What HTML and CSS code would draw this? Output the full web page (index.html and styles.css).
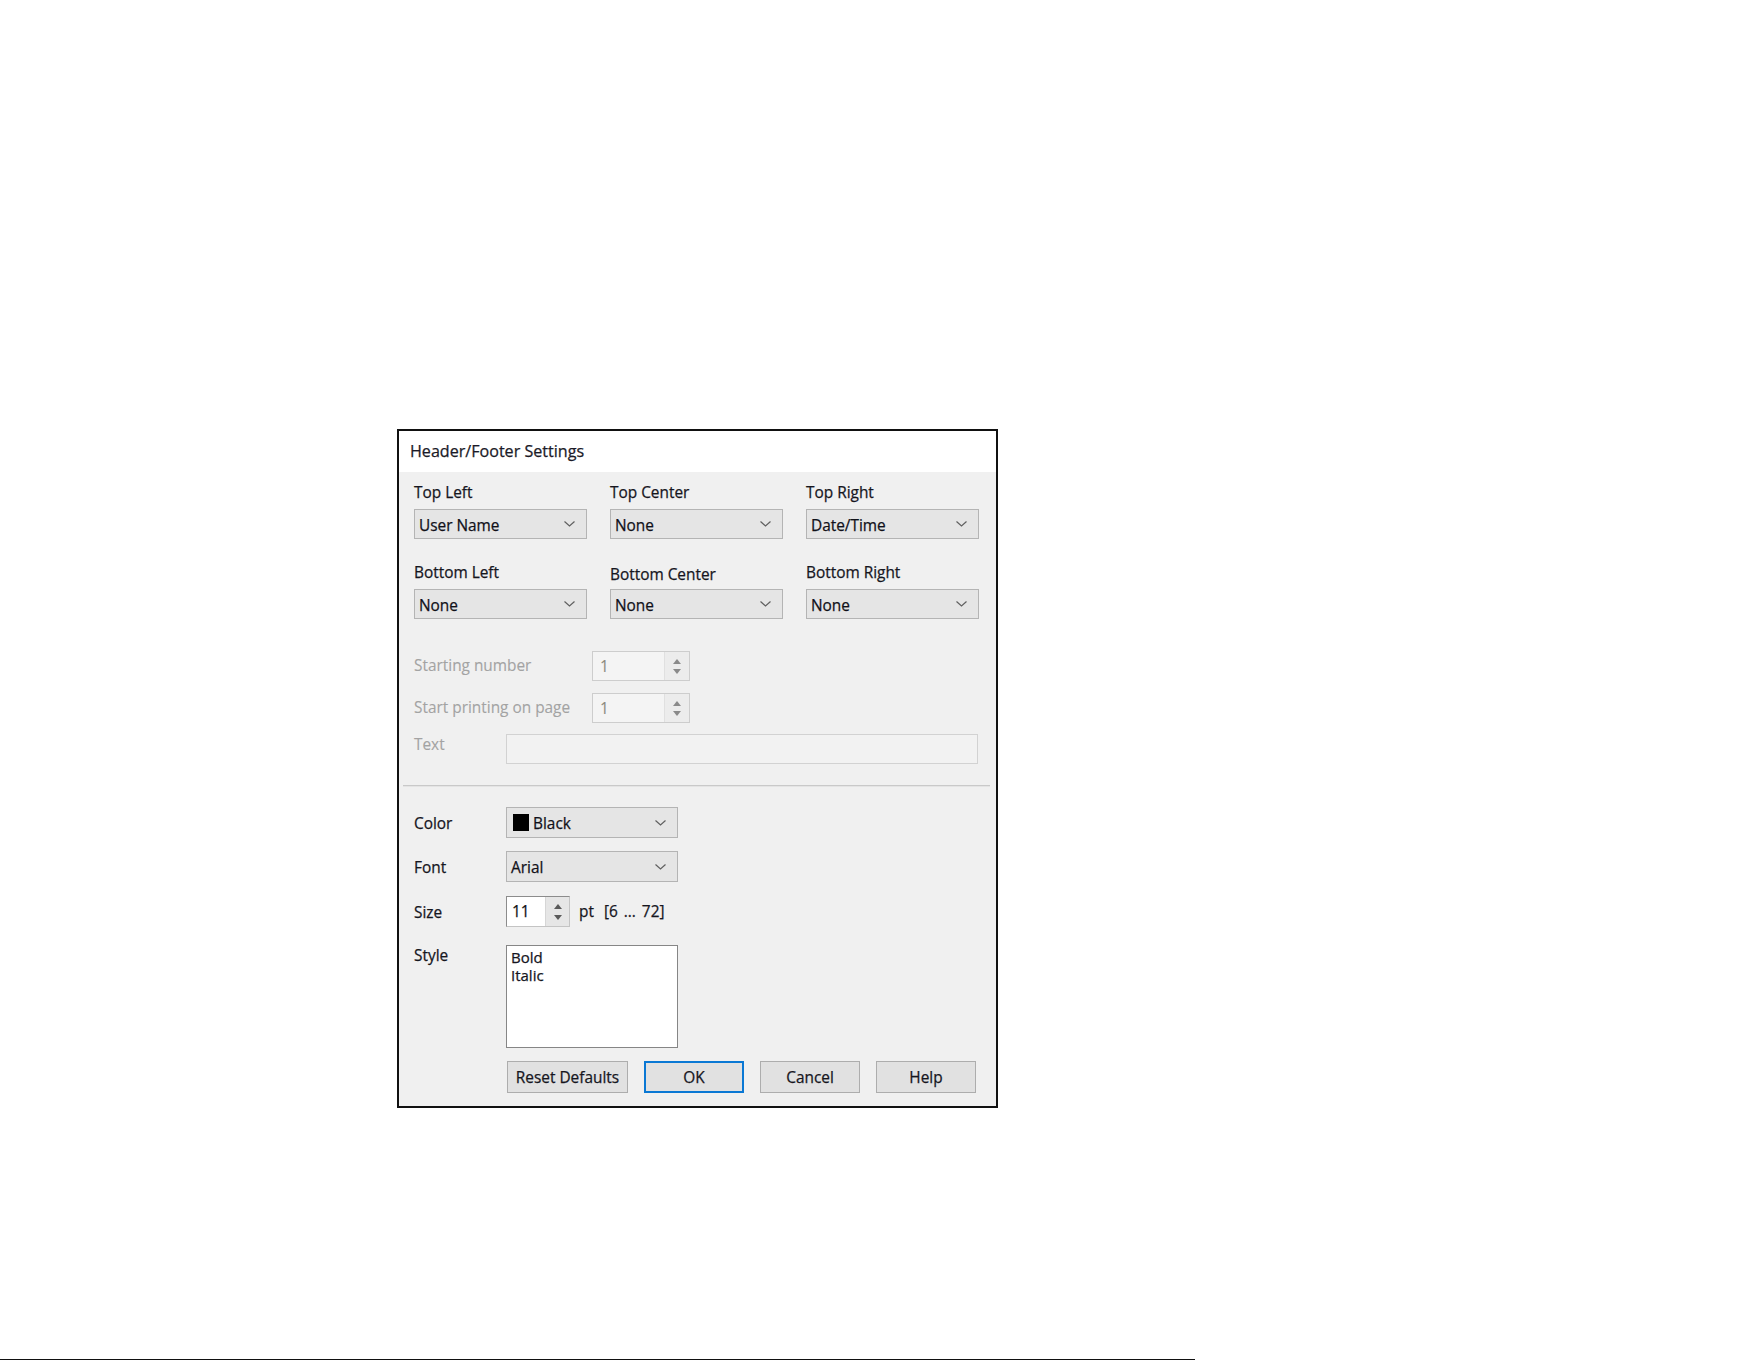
FILE: index.html
```html
<!DOCTYPE html>
<html lang="en">
<head>
<meta charset="utf-8">
<title>Header/Footer Settings</title>
<link rel="stylesheet" href="styles.css">
</head>
<body>
<div class="page">
  <div class="stage">
    <div class="dialog">
      <div class="titlebar">Header/Footer Settings</div>
      <div class="content">
        <div class="positions">
          <div class="field">
            <div class="label">Top Left</div>
            <div class="combo"><span>User Name</span><svg class="chev" width="11" height="6" viewBox="0 0 11 6"><polyline points="0.5,0.5 5.5,5 10.5,0.5"/></svg></div>
          </div>
          <div class="field">
            <div class="label">Top Center</div>
            <div class="combo"><span>None</span><svg class="chev" width="11" height="6" viewBox="0 0 11 6"><polyline points="0.5,0.5 5.5,5 10.5,0.5"/></svg></div>
          </div>
          <div class="field">
            <div class="label">Top Right</div>
            <div class="combo"><span>Date/Time</span><svg class="chev" width="11" height="6" viewBox="0 0 11 6"><polyline points="0.5,0.5 5.5,5 10.5,0.5"/></svg></div>
          </div>
          <div class="field">
            <div class="label">Bottom Left</div>
            <div class="combo"><span>None</span><svg class="chev" width="11" height="6" viewBox="0 0 11 6"><polyline points="0.5,0.5 5.5,5 10.5,0.5"/></svg></div>
          </div>
          <div class="field">
            <div class="label label-low">Bottom Center</div>
            <div class="combo"><span>None</span><svg class="chev" width="11" height="6" viewBox="0 0 11 6"><polyline points="0.5,0.5 5.5,5 10.5,0.5"/></svg></div>
          </div>
          <div class="field">
            <div class="label">Bottom Right</div>
            <div class="combo"><span>None</span><svg class="chev" width="11" height="6" viewBox="0 0 11 6"><polyline points="0.5,0.5 5.5,5 10.5,0.5"/></svg></div>
          </div>
        </div>

        <div class="numbering">
          <div class="num-row">
            <div class="label disabled">Starting number</div>
            <div class="spin spin-off">
              <span class="spin-value">1</span>
              <div class="spin-btns">
                <svg width="8" height="5" viewBox="0 0 8 5"><polygon points="0,5 4,0 8,5"/></svg>
                <svg width="8" height="5" viewBox="0 0 8 5"><polygon points="0,0 8,0 4,5"/></svg>
              </div>
            </div>
          </div>
          <div class="num-row">
            <div class="label disabled">Start printing on page</div>
            <div class="spin spin-off">
              <span class="spin-value">1</span>
              <div class="spin-btns">
                <svg width="8" height="5" viewBox="0 0 8 5"><polygon points="0,5 4,0 8,5"/></svg>
                <svg width="8" height="5" viewBox="0 0 8 5"><polygon points="0,0 8,0 4,5"/></svg>
              </div>
            </div>
          </div>
          <div class="text-row">
            <div class="label disabled">Text</div>
            <div class="textbox-off"></div>
          </div>
        </div>

        <div class="separator"></div>

        <div class="format">
          <div class="fmt-row row-color">
            <div class="label">Color</div>
            <div class="combo combo-short"><span class="swatch-wrap"><span class="swatch"></span>Black</span><svg class="chev" width="11" height="6" viewBox="0 0 11 6"><polyline points="0.5,0.5 5.5,5 10.5,0.5"/></svg></div>
          </div>
          <div class="fmt-row row-font">
            <div class="label">Font</div>
            <div class="combo combo-short"><span>Arial</span><svg class="chev" width="11" height="6" viewBox="0 0 11 6"><polyline points="0.5,0.5 5.5,5 10.5,0.5"/></svg></div>
          </div>
          <div class="fmt-row row-size">
            <div class="label">Size</div>
            <div class="size-ctl">
              <div class="spin spin-on">
                <span class="spin-value">11</span>
                <div class="spin-btns">
                  <svg width="8" height="5" viewBox="0 0 8 5"><polygon points="0,5 4,0 8,5"/></svg>
                  <svg width="8" height="5" viewBox="0 0 8 5"><polygon points="0,0 8,0 4,5"/></svg>
                </div>
              </div>
              <span class="unit">pt</span>
              <span class="range">[6 ... 72]</span>
            </div>
          </div>
          <div class="fmt-row row-style">
            <div class="label">Style</div>
            <div class="listbox">
              <div class="list-item">Bold</div>
              <div class="list-item">Italic</div>
            </div>
          </div>
          <div class="buttons">
            <div class="btn btn-wide">Reset Defaults</div>
            <div class="btn btn-default">OK</div>
            <div class="btn">Cancel</div>
            <div class="btn">Help</div>
          </div>
        </div>
      </div>
    </div>
  </div>
  <div class="baseline"></div>
</div>
</body>
</html>
```

FILE: styles.css
```css
* {
  box-sizing: border-box;
}

html, body {
  margin: 0;
  padding: 0;
  background: #ffffff;
}

body {
  font-family: "Open Sans", "Noto Sans", "Liberation Sans", sans-serif;
  font-size: 15.4px;
  color: #16161e;
  -webkit-text-stroke: 0.25px #16161e;
}

.page {
  width: 1761px;
  height: 1361px;
  display: flex;
  flex-direction: column;
  overflow: hidden;
}

.stage {
  padding: 429px 0 0 397px;
}

/* dialog frame */
.dialog {
  width: 601px;
  border: 2px solid #111111;
  background: #f0f0f0;
}

.titlebar {
  height: 41px;
  background: #ffffff;
  padding: 0 0 1px 11px;
  display: flex;
  align-items: center;
  font-size: 16.1px;
  color: #1c1c2a;
}

.content {
  padding: 10px 6px 13px 15px;
}

.label {
  line-height: 20px;
  height: 20px;
  white-space: nowrap;
  padding-top: 1px;
}

.label-low {
  position: relative;
  top: 2px;
}

.disabled {
  color: #a3a3a3;
  -webkit-text-stroke: 0.1px #a3a3a3;
}

/* six position selectors */
.positions {
  display: grid;
  grid-template-columns: 173px 173px 173px;
  column-gap: 23px;
  row-gap: 23px;
}

.field {
  display: flex;
  flex-direction: column;
  gap: 7px;
}

.combo {
  height: 30px;
  background: #e5e5e5;
  border: 1px solid #b4b4b4;
  display: flex;
  align-items: center;
  justify-content: space-between;
  padding: 2px 11px 0 4px;
  color: #101018;
}

.combo-short {
  width: 172px;
  height: 31px;
}

.chev {
  display: block;
  fill: none;
  stroke: #606060;
  stroke-width: 1.2;
  margin-top: -2px;
}

.swatch-wrap {
  display: flex;
  align-items: center;
  gap: 4px;
  margin-left: 2px;
}

.swatch {
  width: 16px;
  height: 17px;
  background: #000000;
  display: inline-block;
  margin-top: -2px;
}

/* page numbering block (disabled) */
.numbering {
  margin-top: 32px;
  display: flex;
  flex-direction: column;
}

.num-row {
  display: grid;
  grid-template-columns: 178px 98px;
  align-items: center;
  height: 30px;
  margin-bottom: 12px;
}

.num-row .label {
  position: relative;
  top: -1px;
}

.spin {
  height: 30px;
  display: flex;
  align-items: stretch;
}

.spin-value {
  flex: 1;
  display: flex;
  align-items: center;
  padding-left: 7px;
}

.spin-btns {
  width: 25px;
  display: flex;
  flex-direction: column;
  align-items: center;
  justify-content: center;
  gap: 5px;
}

.spin-btns svg {
  display: block;
}

.spin-off {
  width: 98px;
  border: 1px solid #cdcdcd;
  background: #f4f4f4;
  color: #8d8a7f;
  -webkit-text-stroke: 0.1px #8d8a7f;
}

.spin-off .spin-btns {
  background: #ececec;
  border-left: 1px solid #e0e0e0;
}

.spin-off .spin-btns svg {
  fill: #8a8a8a;
}

.text-row {
  display: grid;
  grid-template-columns: 92px 472px;
  margin-top: -1px;
}

.textbox-off {
  height: 30px;
  border: 1px solid #d2d2d2;
  background: #f2f2f2;
}

.separator {
  margin: 21px 0 20px -11px;
  width: 587px;
  height: 2px;
  background: #c9c9c9;
  border-bottom: 1px solid #e4e4e4;
}

/* text formatting block */
.format {
  display: flex;
  flex-direction: column;
}

.fmt-row {
  display: grid;
  grid-template-columns: 92px auto;
  align-items: center;
}

.row-font {
  margin-top: 13px;
}

.row-size {
  margin-top: 14px;
}

.row-style {
  margin-top: 18px;
  align-items: start;
}

.size-ctl {
  display: flex;
  align-items: center;
}

.spin-on {
  width: 64px;
  height: 31px;
  border: 1px solid #8c8c8c;
  border-right-color: #c4c4c4;
  border-bottom-color: #c4c4c4;
  background: #ffffff;
  color: #111111;
}

.spin-on .spin-value {
  padding-left: 5px;
}

.spin-on .spin-btns {
  width: 24px;
  background: #e6e6e6;
  border-left: 1px solid #d6d6d6;
  gap: 6px;
}

.spin-on .spin-btns svg {
  fill: #5a5a5a;
}

.unit {
  margin-left: 9px;
}

.range {
  margin-left: 10px;
  word-spacing: 2px;
}

.listbox {
  width: 172px;
  height: 103px;
  background: #ffffff;
  border: 1px solid #868686;
  padding: 2px 3px 2px 4px;
}

.list-item {
  height: 18px;
  line-height: 18px;
  font-size: 15px;
}

.buttons {
  margin: 13px 0 0 93px;
  display: flex;
  gap: 16px;
}

.btn {
  width: 100px;
  height: 32px;
  background: #e1e1e1;
  border: 1px solid #adadad;
  display: flex;
  align-items: center;
  justify-content: center;
}

.btn-wide {
  width: 121px;
}

.btn-default {
  border: 2px solid #0a78d4;
}

.baseline {
  margin-top: auto;
  margin-bottom: 1px;
  width: 1195px;
  height: 1px;
  background: #111111;
}
```
